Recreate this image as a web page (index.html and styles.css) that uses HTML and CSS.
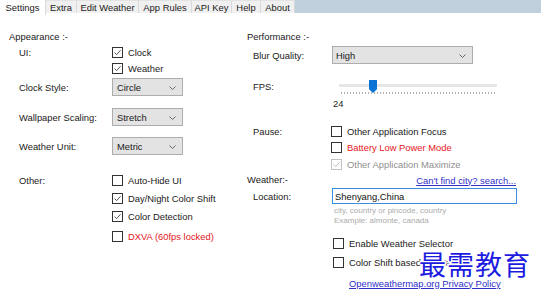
FILE: index.html
```html
<!DOCTYPE html>
<html lang="en">
<head>
    <meta charset="UTF-8">
    <meta name="viewport" content="width=device-width, initial-scale=1.0">
    <title>Settings</title>
    <link rel="stylesheet" href="styles.css">
</head>
<body>
    <div class="tabs">
        <div class="tab active w-settings">Settings</div>
        <div class="tab w-extra">Extra</div>
        <div class="tab w-edit">Edit Weather</div>
        <div class="tab w-rules">App Rules</div>
        <div class="tab w-api">API Key</div>
        <div class="tab w-help">Help</div>
        <div class="tab w-about">About</div>
    </div>

    <div class="page">
        <!-- Appearance -->
        <div class="col left">
            <div class="title">Appearance :-</div>

            <div class="row mt1">
                <span class="lbl">UI:</span>
                <span class="cb checked"><svg viewBox="0 0 9 9"><path d="M1.6 4.6 L3.6 6.6 L7.6 2.2"/></svg></span>
                <span>Clock</span>
            </div>
            <div class="row">
                <span class="lbl"></span>
                <span class="cb checked"><svg viewBox="0 0 9 9"><path d="M1.6 4.6 L3.6 6.6 L7.6 2.2"/></svg></span>
                <span>Weather</span>
            </div>

            <div class="row tall mt2">
                <span class="lbl">Clock Style:</span>
                <div class="select small">Circle<svg class="chev" viewBox="0 0 7 4"><path d="M0.5 0.5 L3.5 3.5 L6.5 0.5"/></svg></div>
            </div>
            <div class="row tall mt12">
                <span class="lbl">Wallpaper Scaling:</span>
                <div class="select small">Stretch<svg class="chev" viewBox="0 0 7 4"><path d="M0.5 0.5 L3.5 3.5 L6.5 0.5"/></svg></div>
            </div>
            <div class="row tall mt11">
                <span class="lbl">Weather Unit:</span>
                <div class="select small">Metric<svg class="chev" viewBox="0 0 7 4"><path d="M0.5 0.5 L3.5 3.5 L6.5 0.5"/></svg></div>
            </div>

            <div class="row mt17">
                <span class="lbl">Other:</span>
                <span class="cb"></span>
                <span>Auto-Hide UI</span>
            </div>
            <div class="row mt2">
                <span class="lbl"></span>
                <span class="cb checked"><svg viewBox="0 0 9 9"><path d="M1.6 4.6 L3.6 6.6 L7.6 2.2"/></svg></span>
                <span>Day/Night Color Shift</span>
            </div>
            <div class="row mt2">
                <span class="lbl"></span>
                <span class="cb checked"><svg viewBox="0 0 9 9"><path d="M1.6 4.6 L3.6 6.6 L7.6 2.2"/></svg></span>
                <span>Color Detection</span>
            </div>
            <div class="row mt4">
                <span class="lbl"></span>
                <span class="cb"></span>
                <span class="red">DXVA (60fps locked)</span>
            </div>
        </div>

        <!-- Performance / Weather -->
        <div class="col right">
            <div class="title">Performance :-</div>

            <div class="row tall mt3">
                <span class="lbl">Blur Quality:</span>
                <div class="select wide">High<svg class="chev" viewBox="0 0 7 4"><path d="M0.5 0.5 L3.5 3.5 L6.5 0.5"/></svg></div>
            </div>

            <div class="row mt14">
                <span class="lbl">FPS:</span>
                <div class="slider">
                    <div class="track"></div>
                    <div class="ticks"></div>
                    <div class="thumb"></div>
                </div>
            </div>
            <div class="row value mt3">
                <span class="lbl"></span>
                <span class="fps">24</span>
            </div>

            <div class="row mt14">
                <span class="lbl">Pause:</span>
                <span class="cb"></span>
                <span>Other Application Focus</span>
            </div>
            <div class="row">
                <span class="lbl"></span>
                <span class="cb"></span>
                <span class="red">Battery Low Power Mode</span>
            </div>
            <div class="row mt1">
                <span class="lbl"></span>
                <span class="cb checked disabled"><svg viewBox="0 0 9 9"><path d="M1.6 4.6 L3.6 6.6 L7.6 2.2"/></svg></span>
                <span class="grey">Other Application Maximize</span>
            </div>

            <div class="row heading mt2">
                <span class="subtitle">Weather:-</span>
                <a class="link find" href="#">Can't find city? search...</a>
            </div>
            <div class="row mt2">
                <span class="lbl">Location:</span>
                <input class="location" type="text" value="Shenyang,China">
            </div>
            <div class="hints">
                <div>city, country or pincode, country</div>
                <div>Example: almonte, canada</div>
            </div>

            <div class="row mt9 indent">
                <span class="cb"></span>
                <span>Enable Weather Selector</span>
            </div>
            <div class="row mt3 indent">
                <span class="cb"></span>
                <span>Color Shift based on Weather</span>
            </div>
            <div class="row mt7 privacy">
                <a class="link" href="#">Openweathermap.org Privacy Policy</a>
            </div>
        </div>
    </div>

    <div class="watermark">最需教育</div>
</body>
</html>
```

FILE: styles.css
```css
body {
    margin: 0;
    width: 541px;
    height: 296px;
    overflow: hidden;
    position: relative;
    background: #fff;
    color: #1a1a1a;
    font-family: "Liberation Sans", Arial, sans-serif;
    font-size: 9.4px;
}
.tabs {
    display: flex;
    height: 13px;
    background: #c0cfdc;
}
.tab {
    display: flex;
    align-items: center;
    justify-content: center;
    box-sizing: border-box;
    height: 13px;
    background: #f0f0f0;
    border-right: 1px solid #d9d9d9;
    border-top: 1px solid #e3e3e3;
}
.tab.active {
    background: #fff;
    height: 15px;
    border-top: none;
}
.w-settings { width: 46px; }
.w-extra { width: 31px; }
.w-edit { width: 62px; }
.w-rules { width: 53px; }
.w-api { width: 40px; }
.w-help { width: 29px; }
.w-about { width: 34px; }

.page {
    display: flex;
    padding-top: 18px;
}
.col {
    display: flex;
    flex-direction: column;
    box-sizing: border-box;
}
.left {
    width: 247px;
    padding-left: 9px;
}
.right {
    width: 270px;
}
.title, .subtitle {
    height: 12px;
    line-height: 12px;
}
.row {
    display: flex;
    align-items: center;
    height: 16px;
}
.row.tall {
    height: 18px;
}
.row.value {
    height: 12px;
}
.row.heading {
    height: 12px;
}
.lbl {
    flex: none;
    box-sizing: border-box;
}
.left .lbl {
    width: 103px;
    padding-left: 10px;
}
.right .lbl {
    width: 84px;
    padding-left: 6px;
}
.mt1 { margin-top: 1px; }
.mt2 { margin-top: 2px; }
.mt3 { margin-top: 3px; }
.mt4 { margin-top: 4px; }
.mt7 { margin-top: 7px; }
.mt9 { margin-top: 9px; }
.mt11 { margin-top: 11px; }
.mt12 { margin-top: 12px; }
.mt14 { margin-top: 14px; }
.mt17 { margin-top: 17px; }

.cb {
    flex: none;
    box-sizing: border-box;
    width: 11px;
    height: 11px;
    margin-right: 5px;
    border: 1px solid #333;
    background: #fff;
    display: flex;
}
.cb svg {
    width: 9px;
    height: 9px;
}
.cb path {
    fill: none;
    stroke: #444;
    stroke-width: 0.9;
}
.cb.disabled {
    border-color: #c2c2c2;
}
.cb.disabled path {
    stroke: #b5b5b5;
}
.red {
    color: #e4161d;
}
.grey {
    color: #8f8f8f;
}

.select {
    position: relative;
    box-sizing: border-box;
    height: 18px;
    display: flex;
    align-items: center;
    padding-left: 4px;
    background: #e3e3e3;
    border: 1px solid #adadad;
}
.select.small {
    width: 71px;
}
.select.wide {
    width: 141px;
    margin-left: 1px;
    padding-left: 3px;
}
.chev {
    position: absolute;
    right: 6px;
    top: 7px;
    width: 7px;
    height: 4px;
}
.chev path {
    fill: none;
    stroke: #666;
    stroke-width: 1;
}

.slider {
    position: relative;
    width: 158px;
    height: 16px;
    margin-left: 8px;
}
.track {
    position: absolute;
    left: 0;
    right: 0;
    top: 6px;
    height: 3px;
    background: #e6e6e6;
    border-radius: 1px;
}
.ticks {
    position: absolute;
    left: 2px;
    right: 2px;
    top: 14px;
    height: 2px;
    background: repeating-linear-gradient(90deg, #b0b0b0 0 1px, transparent 1px 3px);
}
.thumb {
    position: absolute;
    left: 30px;
    top: 2px;
    width: 8px;
    height: 13px;
    background: #0a74d6;
    clip-path: polygon(0 0, 100% 0, 100% 72%, 50% 100%, 0 72%);
}
.fps {
    margin-left: 2px;
}

.link {
    color: #2f2fc8;
    text-decoration: underline;
}
.find {
    margin-left: auto;
    margin-right: 1px;
}
.location {
    box-sizing: border-box;
    width: 185px;
    height: 16px;
    margin: 0 0 0 1px;
    padding: 0 2px;
    border: 1px solid #3a8ee0;
    outline: none;
    font-family: inherit;
    font-size: 9.4px;
    color: #111;
}
.hints {
    margin-top: 2px;
    padding-left: 87px;
    font-size: 8px;
    line-height: 10px;
    color: #ababab;
}
.indent {
    padding-left: 86px;
}
.privacy {
    padding-left: 102px;
    height: 12px;
}

.watermark {
    position: absolute;
    left: 419px;
    top: 250px;
    font-family: "Noto Sans CJK SC", sans-serif;
    font-size: 27px;
    line-height: 28px;
    letter-spacing: 1px;
    color: #1c1ce0;
    text-shadow: 2px 0 #fff, -2px 0 #fff, 0 2px #fff, 0 -2px #fff, 1px 1px #fff, -1px -1px #fff, 1px -1px #fff, -1px 1px #fff;
}
```
